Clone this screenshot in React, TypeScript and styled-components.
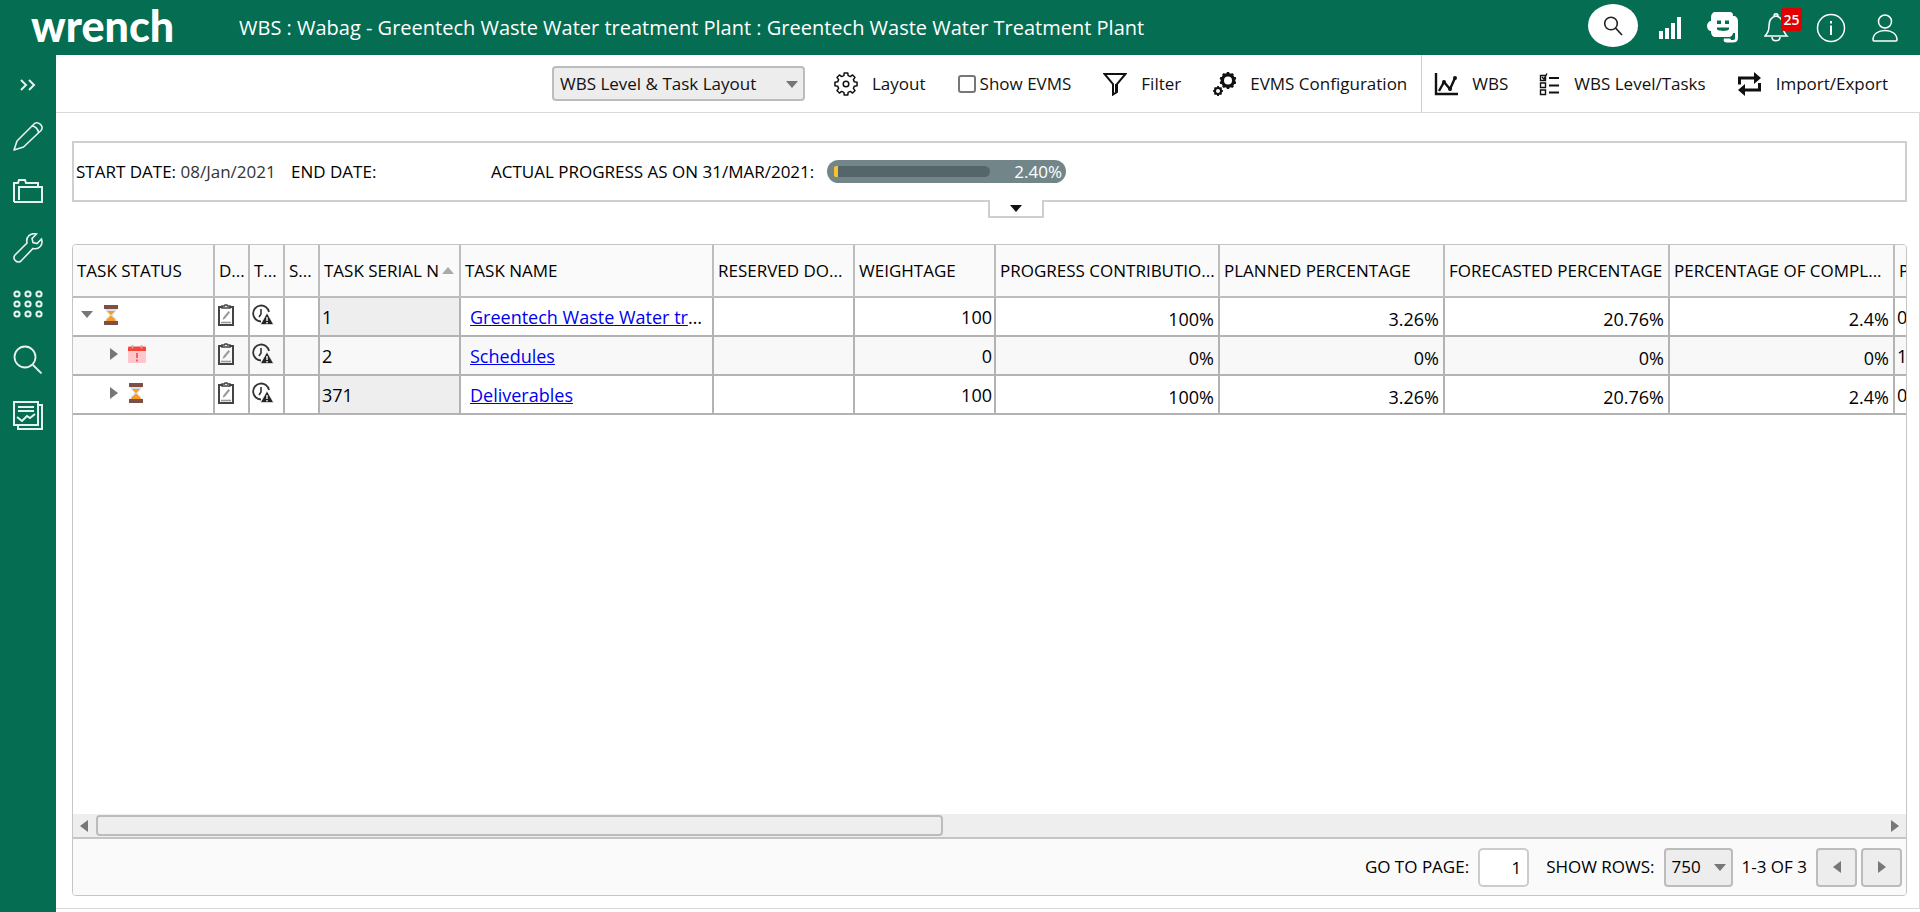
import React from "react";
import styled, { createGlobalStyle, css } from "styled-components";

const GlobalStyle = createGlobalStyle`
  *, *::before, *::after { box-sizing: border-box; }
  body {
    margin: 0;
    background: #fff;
    color: #111;
    font: 17px/24px "Open Sans", "Noto Sans", sans-serif;
  }
  button, input, select { font: inherit; color: inherit; }
  svg { display: block; flex: none; }
`;

const green = "#056d51";
const line = "#c5c5c5";

const Page = styled.div`
  min-height: 100vh;
  display: flex;
  flex-direction: column;
`;

/* ---------- top bar ---------- */

const TopBar = styled.header`
  height: 55px;
  padding: 0 22px 0 31px;
  display: flex;
  align-items: center;
  background: ${green};
  color: #fff;
`;

const Logo = styled.a`
  width: 208px;
  padding-bottom: 4px;
  color: #fff;
  font: 900 43px/48px Lato, sans-serif;
  text-decoration: none;
`;

const PageTitle = styled.h1`
  margin: 0;
  flex: 1;
  font-size: 20px;
  line-height: 28px;
  font-weight: 400;
  white-space: nowrap;
`;

const TopActions = styled.nav`
  display: flex;
  align-items: center;
  gap: 26px;
`;

const IconButton = styled.button`
  display: flex;
  padding: 0;
  border: 0;
  background: none;
  color: inherit;
  position: relative;
`;

const RoundButton = styled(IconButton)`
  width: 50px;
  height: 43px;
  margin: 0 -5px 4px 0;
  align-items: center;
  justify-content: center;
  border-radius: 50%;
  background: #fff;
  color: #222;
`;

const Badge = styled.span`
  position: absolute;
  left: 17px;
  top: -5px;
  width: 21px;
  height: 23px;
  border-radius: 3px;
  background: #e00000;
  color: #fff;
  font-size: 14px;
  line-height: 23px;
  font-weight: 600;
  text-align: center;
`;

/* ---------- side bar ---------- */

const Body = styled.div`
  flex: 1;
  display: flex;
`;

const SideBar = styled.nav`
  width: 56px;
  padding-top: 24px;
  display: flex;
  flex-direction: column;
  align-items: center;
  gap: 30px;
  background: ${green};
  color: #e6f2ee;
`;

const SideList = styled.div`
  display: flex;
  flex-direction: column;
  align-items: center;
  gap: 27px;

  ${IconButton} {
    height: 29px;
    align-items: center;
  }
`;

const Main = styled.main`
  flex: 1;
  min-width: 0;
  display: flex;
  flex-direction: column;
`;

/* ---------- toolbar ---------- */

const Toolbar = styled.div`
  height: 58px;
  padding-right: 29px;
  display: flex;
  align-items: center;
  justify-content: flex-end;
  border-bottom: 1px solid #d6dada;
`;

const ToolGroup = styled.div<{ $divided?: boolean }>`
  height: 100%;
  display: flex;
  align-items: center;
  gap: 26px;
  ${(p) =>
    p.$divided &&
    css`
      gap: 25px;
      margin-left: 11px;
      padding-left: 9px;
      border-left: 1px solid #b9d9d9;
    `}
`;

const ToolButton = styled.button`
  display: flex;
  align-items: center;
  gap: 14px;
  padding: 0 3px;
  border: 0;
  background: none;
  white-space: nowrap;
`;

const CheckLabel = styled.label`
  display: flex;
  align-items: center;
  gap: 4px;
  padding: 0 3px;
  white-space: nowrap;
`;

const CheckBox = styled.input`
  appearance: none;
  width: 18px;
  height: 18px;
  margin: 0;
  border: 2px solid #777;
  border-radius: 3px;
  background: #fff;
`;

const SelectBox = styled.span<{ $width: number; $height: number }>`
  position: relative;
  display: flex;
  width: ${(p) => p.$width}px;
  height: ${(p) => p.$height}px;

  select {
    appearance: none;
    width: 100%;
    padding: 0 20px 0 6px;
    border: 2px solid #bcbcbc;
    border-radius: 4px;
    background: #ededed;
  }
  svg {
    position: absolute;
    right: 7px;
    top: 50%;
    margin-top: -3px;
    pointer-events: none;
  }
`;

/* ---------- content ---------- */

const Content = styled.div`
  flex: 1;
  margin-bottom: 3px;
  padding: 28px 12px 12px 16px;
  display: flex;
  flex-direction: column;
  border: solid #d6dada;
  border-width: 0 1px 1px 0;
`;

const Summary = styled.section`
  position: relative;
  height: 61px;
  margin-bottom: 42px;
  padding: 0 2px;
  display: flex;
  align-items: center;
  border: 2px solid #cfcfcf;
`;

const Field = styled.span<{ $width: number }>`
  width: ${(p) => p.$width}px;
  color: #333;
  white-space: nowrap;
  b {
    color: #000;
    font-weight: 400;
  }
`;

const Progress = styled.div`
  width: 239px;
  height: 23px;
  padding: 0 4px 0 7px;
  display: flex;
  align-items: center;
  justify-content: space-between;
  border-radius: 12px;
  background: #72868a;
  color: #fff;
`;

const Track = styled.div`
  width: 156px;
  height: 11px;
  overflow: hidden;
  border-radius: 2px 6px 6px 2px;
  background: #54666a;
`;

const Fill = styled.div`
  height: 100%;
  background: #fbc02d;
`;

const Expander = styled.button`
  position: absolute;
  left: 50%;
  top: 100%;
  width: 56px;
  height: 18px;
  margin-left: -2px;
  padding: 0;
  display: flex;
  align-items: center;
  justify-content: center;
  border: 2px solid #cfcfcf;
  border-top: 0;
  background: #fff;
`;

/* ---------- grid ---------- */

const Grid = styled.section`
  flex: 1;
  display: flex;
  flex-direction: column;
  border: 1px solid ${line};
  border-radius: 4px;
  overflow: hidden;
`;

const TableArea = styled.div`
  flex: 1;
  overflow: hidden;
`;

const Table = styled.table`
  width: 1964px;
  table-layout: fixed;
  border-collapse: separate;
  border-spacing: 0;
  color: #000;
`;

const Th = styled.th`
  height: 53px;
  padding: 0 0 0 4px;
  border: solid #bdbdbd;
  border-width: 0 2px 2px 0;
  background: #fafafa;
  font-weight: 400;
  text-align: left;
`;

const HeadText = styled.div`
  display: flex;
  align-items: center;
  gap: 3px;
  white-space: nowrap;
`;

const Row = styled.tr`
  background: #fff;
  &:nth-child(even) { background: #f8f8f8; }
`;

type CellKind = "number" | "percent" | "serial" | "link" | "icon";

const Td = styled.td<{ $kind?: CellKind }>`
  height: 39px;
  padding: 0 2px;
  border: solid #b3b3b3;
  border-width: 0 2px 2px 0;
  font-size: 18px;
  line-height: 24px;
  white-space: nowrap;
  overflow: hidden;
  text-overflow: ellipsis;
  ${(p) => p.$kind === "icon" && css`padding: 0 2px 4px;`}
  ${(p) => (p.$kind === "number" || p.$kind === "percent") && css`text-align: right;`}
  ${(p) => p.$kind === "percent" && css`padding: 4px 4px 0 0;`}
  ${(p) => p.$kind === "serial" && css`${Row}:nth-child(odd) & { background: #eee; }`}
  ${(p) => p.$kind === "link" && css`padding: 0 6px 0 9px;`}
`;

const NameLink = styled.a`
  color: #0000ee;
`;

const StatusCell = styled.div<{ $level: number }>`
  padding-left: ${(p) => 6 + p.$level * 29}px;
  display: flex;
  align-items: center;
  gap: 10px;
`;

const ScrollBar = styled.div`
  height: 25px;
  padding: 0 7px;
  display: flex;
  align-items: center;
  gap: 8px;
  background: #eee;
  border-bottom: 2px solid ${line};
`;

const Rail = styled.div`
  flex: 1;
  height: 21px;
`;

const Thumb = styled.div`
  width: 47.4%;
  height: 100%;
  border: 2px solid #bcbcbc;
  border-radius: 4px;
`;

const Pager = styled.footer`
  height: 56px;
  padding-right: 4px;
  display: flex;
  align-items: center;
  justify-content: flex-end;
  gap: 9px;
  background: #fafafa;
  color: #000;
`;

const PagerLabel = styled.label`
  display: flex;
  align-items: center;
  gap: 9px;
  & + & { margin-left: 8px; }
`;

const PageInput = styled.input`
  width: 51px;
  height: 39px;
  padding: 0 6px;
  border: 2px solid #ccc;
  border-radius: 5px;
  background: #fff;
  text-align: right;
`;

const PagerButtons = styled.span`
  display: flex;
  gap: 4px;
`;

const PagerButton = styled.button`
  width: 41px;
  height: 39px;
  padding: 0;
  display: flex;
  align-items: center;
  justify-content: center;
  border: 2px solid #bcbcbc;
  border-radius: 4px;
  background: #ededed;
`;

/* ---------- drawings ---------- */

type Dir = "up" | "down" | "left" | "right";

const trianglePaths: Record<Dir, [number, number, string]> = {
  up: [12, 7, "M0 7 6 0l6 7z"],
  down: [12, 7, "M0 0h12L6 7z"],
  left: [8, 12, "M8 0v12L0 6z"],
  right: [8, 12, "M0 0v12l8-6z"],
};

function Triangle({ dir, color = "#777" }: { dir: Dir; color?: string }) {
  const [w, h, d] = trianglePaths[dir];
  return (
    <svg width={w} height={h} viewBox={`0 0 ${w} ${h}`} aria-hidden>
      <path d={d} fill={color} />
    </svg>
  );
}

function Icon({ w, h, sw = 1.6, children }: { w: number; h: number; sw?: number; children: React.ReactNode }) {
  return (
    <svg width={w} height={h} viewBox={`0 0 ${w} ${h}`} fill="none" stroke="currentColor" strokeWidth={sw} aria-hidden>
      {children}
    </svg>
  );
}

/* outline of a toothed wheel centred on cx, cy */
function gearPath(cx: number, cy: number, outer: number, inner: number, teeth: number) {
  const points: string[] = [];
  const step = (Math.PI * 2) / teeth;
  for (let i = 0; i < teeth; i++) {
    const a = i * step - Math.PI / 2;
    [[-0.32, inner], [-0.2, outer], [0.2, outer], [0.32, inner]].forEach(([o, r]) => {
      points.push(`${(cx + r * Math.cos(a + o * step)).toFixed(2)} ${(cy + r * Math.sin(a + o * step)).toFixed(2)}`);
    });
  }
  return `M${points.join("L")}Z`;
}

const SearchSmall = () => (
  <Icon w={20} h={20}>
    <circle cx="8" cy="7.500" r="6.300" />
    <path d="M12.500 12 19 19" strokeWidth="1.800" />
  </Icon>
);

const Bars = () => (
  <Icon w={22} h={22} sw={4}>
    <path d="M2 22v-8M8 22V11M14 22V6M20 22V0" />
  </Icon>
);

const Robot = () => (
  <Icon w={31} h={31}>
    <path d="M8 0h15c2 0 3 1 3 4h1c2 0 4 2 4 5v17c0 3-2 4.500-5 4.500h-5c-4 0-5-1.500-4-4h5c1.500 0 2 .6 2 1.500h2c1.500 0 2-.8 2-2v-5h-2c0 2-2 4-4 4H8c-2 0-4-2-4-5v-1c-2 0-4-2-4-5s2-5 4-5V5c0-3 2-5 4-5z" fill="currentColor" stroke="none" />
    <path d="M10 8.500h4v3.500h-4zM18 8.500h4v3.500h-4zM10 15.500h12v1.500c0 2.500-12 2.500-12 0z" fill={green} stroke="none" />
  </Icon>
);

const Bell = () => (
  <Icon w={26} h={29} sw={1.5}>
    <path d="M12 3C7 4 5 8 5 13c0 5-1 7-4 10h22c-3-3-4-5-4-10 0-5-2-9-7-10zM10 3c0-3 4-3 4 0M8 24c0 5 8 5 8 0" />
  </Icon>
);

const Info = () => (
  <Icon w={30} h={30} sw={1.5}>
    <circle cx="15" cy="15" r="13.500" />
    <path d="M15 12.500V22M15 8v2.500" strokeWidth="2" />
  </Icon>
);

const User = () => (
  <Icon w={26} h={28} sw={1.5}>
    <circle cx="13" cy="7.500" r="6.500" />
    <path d="M1 26c0-6 5-9.500 12-9.500S25 20 25 26c0 .7-.3 1-1 1H2c-.7 0-1-.3-1-1z" />
  </Icon>
);

const Expand = () => (
  <Icon w={18} h={12}>
    <path d="m2 1 5 5-5 5M10 1l5 5-5 5" strokeWidth="2" />
  </Icon>
);

const Pencil = () => (
  <Icon w={30} h={30}>
    <path d="M1 29 4 20 21 3c3-4 11 2 7 6.500L10.500 26zM19 5c3 0 6 3 6.500 6.500" strokeLinejoin="round" />
  </Icon>
);

const Folder = () => (
  <Icon w={30} h={25} sw={2}>
    <path d="M1 23V4h4l1-3h6l1 3h12v4M1 23h28V8H6v13" />
  </Icon>
);

const Wrench = () => (
  <Icon w={30} h={30}>
    <path d="M28.500 6 24 10.500l-4-1-1-4L23.500 1c-6-1.500-11 3-9.500 9L2 22c-3 4 2 9 6 6l12-12.500c6 1.500 10.500-3.500 8.500-9.500z" />
  </Icon>
);

const Dots = () => (
  <Icon w={30} h={28} sw={2}>
    {[4, 14, 24].map((y) => [4, 15, 26].map((x) => <circle key={`${x}-${y}`} cx={x} cy={y} r="2.600" />))}
  </Icon>
);

const SearchLarge = () => (
  <Icon w={30} h={29} sw={1.8}>
    <circle cx="12" cy="12" r="10.500" />
    <path d="m19.500 19.500 9 9" />
  </Icon>
);

const Report = () => (
  <Icon w={30} h={29} sw={2}>
    <path d="M1 1h24v23H1zM25 4h4v24H5v-4M5 6h16M5 10h16" />
    <path d="m4 16 5 4 5-5 3 2 5-4" />
  </Icon>
);

const Gear = () => (
  <Icon w={24} h={24} sw={1.5}>
    <path d={gearPath(12, 12, 11.2, 8.6, 8)} strokeLinejoin="round" />
    <circle cx="12" cy="12" r="2.800" />
  </Icon>
);

const Funnel = () => (
  <Icon w={24} h={24} sw={2}>
    <path d="M1.500 2h21L14 12v8l-4 2.500V12zM13 12v9" />
  </Icon>
);

const Gears = () => (
  <Icon w={23} h={24}>
    <path d={`${gearPath(15, 8.5, 8.5, 7.3, 10)}M11 8.500a4 4 0 1 0 8 0 4 4 0 1 0-8 0z`} fill="currentColor" fillRule="evenodd" stroke="none" />
    <path d={`${gearPath(5, 19, 5, 4.2, 8)}M3 19a2 2 0 1 0 4 0 2 2 0 1 0-4 0z`} fill="currentColor" fillRule="evenodd" stroke="none" />
  </Icon>
);

const Chart = () => (
  <Icon w={24} h={24} sw={2.4}>
    <path d="M2 1v21h22M5 19l5-9 6 7 5-11" />
    <g fill="currentColor" stroke="none">
      <circle cx="10" cy="10" r="2" />
      <circle cx="16" cy="17" r="2" />
      <circle cx="21" cy="6" r="2" />
    </g>
  </Icon>
);

const Levels = () => (
  <Icon w={21} h={24} sw={1.4}>
    <path d="M1.500 3.500h5v5h-5zM1.500 11h5v4.500h-5zM1.500 18h5v4.500h-5zM3 5l2 2 3-5.500" />
    <path d="M10 6h10M10 13.500h10M10 20.500h10" strokeWidth="2.200" />
  </Icon>
);

const Swap = () => (
  <Icon w={25} h={24} sw={3}>
    <path d="M2.500 12.500V6H18M22.500 11v7H7" />
    <path d="m17 0 7 6-7 6zM8 12l-7 6 7 6z" fill="currentColor" stroke="none" />
  </Icon>
);

const Hourglass = () => (
  <Icon w={16} h={20}>
    <path d="M2 3h12c0 4-4 5-4 7s4 3 4 7H2c0-4 4-5 4-7S2 7 2 3z" fill="#d8e2e6" stroke="none" />
    <path d="M4 6h8L8 10zM8 10c1 3 5 3 5 7H3c0-4 4-4 5-7z" fill="#fb9a1c" stroke="none" />
    <path d="M1 0h14v4H1zM1 16h14v4H1z" fill="#7b5147" stroke="none" />
  </Icon>
);

const CalendarAlert = () => (
  <Icon w={18} h={18}>
    <path d="M0 6h18v10.500c0 1-.5 1.500-1.500 1.500h-15C.5 18 0 17.500 0 16.500z" fill="#ffc7cb" stroke="none" />
    <path d="M0 6V3c0-1 .5-1.500 1.500-1.500h15c1 0 1.500.5 1.500 1.500v3z" fill="#f8443c" stroke="none" />
    <path d="M4.500 0v3.500M13.500 0v3.500" stroke="#b5b5b5" />
    <path d="M9 8v5M9 14.500v2" stroke="#f44" />
  </Icon>
);

const Clipboard = () => (
  <Icon w={18} h={22}>
    <path d="M2 3h14v18H2z" stroke="#444" strokeWidth="2" />
    <path d="M5 4V2h2.500L8 1h2l.5 1H13v2z" fill="#fff" stroke="#444" />
    <path d="m5.500 16 1-3 5-6 1.500 1.500-5 6z" fill="#999" stroke="none" />
    <path d="M4 18.500h10" stroke="#999" />
  </Icon>
);

const ClockAlert = () => (
  <Icon w={22} h={22}>
    <path d="M17 8A8 8 0 1 0 9 17.500" stroke="#333" strokeWidth="1.800" />
    <path d="M9 5v5l-2 3" stroke="#333" />
    <path d="m15 9 6.500 11.500h-13z" fill="#222" stroke="#fff" strokeWidth=".6" />
    <path d="M15 13v4M15 18v1.400" stroke="#fff" strokeWidth="1.400" />
  </Icon>
);

/* ---------- data ---------- */

const columns: { label: string; width: number; sorted?: boolean }[] = [
  { label: "TASK STATUS", width: 142 },
  { label: "D...", width: 35 },
  { label: "T...", width: 35 },
  { label: "S...", width: 35 },
  { label: "TASK SERIAL N", width: 141, sorted: true },
  { label: "TASK NAME", width: 253 },
  { label: "RESERVED DO...", width: 141 },
  { label: "WEIGHTAGE", width: 141 },
  { label: "PROGRESS CONTRIBUTIO...", width: 224 },
  { label: "PLANNED PERCENTAGE", width: 225 },
  { label: "FORECASTED PERCENTAGE", width: 225 },
  { label: "PERCENTAGE OF COMPL...", width: 225 },
  { label: "P", width: 142 },
];

const rows = [
  { level: 0, status: "active", serial: "1", name: "Greentech Waste Water treatment Plant", weight: "100", percents: ["100%", "3.26%", "20.76%", "2.4%"], last: "0" },
  { level: 1, status: "late", serial: "2", name: "Schedules", weight: "0", percents: ["0%", "0%", "0%", "0%"], last: "1" },
  { level: 1, status: "active", serial: "371", name: "Deliverables", weight: "100", percents: ["100%", "3.26%", "20.76%", "2.4%"], last: "0" },
];

const sideItems: [string, () => React.ReactElement][] = [
  ["Edit", Pencil],
  ["Folders", Folder],
  ["Tools", Wrench],
  ["Apps", Dots],
  ["Search", SearchLarge],
  ["Reports", Report],
];

export default function App() {
  return (
    <Page>
      <GlobalStyle />
      <TopBar>
        <Logo href="#">wrench</Logo>
        <PageTitle>WBS : Wabag - Greentech Waste Water treatment Plant : Greentech Waste Water Treatment Plant</PageTitle>
        <TopActions>
          <RoundButton aria-label="Search"><SearchSmall /></RoundButton>
          <IconButton aria-label="Statistics"><Bars /></IconButton>
          <IconButton aria-label="Assistant"><Robot /></IconButton>
          <IconButton aria-label="Notifications"><Bell /><Badge>25</Badge></IconButton>
          <IconButton aria-label="Information"><Info /></IconButton>
          <IconButton aria-label="Account"><User /></IconButton>
        </TopActions>
      </TopBar>
      <Body>
        <SideBar>
          <IconButton aria-label="Expand menu"><Expand /></IconButton>
          <SideList>
            {sideItems.map(([label, Drawing]) => (
              <IconButton key={label} aria-label={label}><Drawing /></IconButton>
            ))}
          </SideList>
        </SideBar>
        <Main>
          <Toolbar>
            <ToolGroup>
              <SelectBox $width={253} $height={35}>
                <select aria-label="Layout"><option>WBS Level &amp; Task Layout</option></select>
                <Triangle dir="down" />
              </SelectBox>
              <ToolButton><Gear />Layout</ToolButton>
              <CheckLabel><CheckBox type="checkbox" />Show EVMS</CheckLabel>
              <ToolButton><Funnel />Filter</ToolButton>
              <ToolButton><Gears />EVMS Configuration</ToolButton>
            </ToolGroup>
            <ToolGroup $divided>
              <ToolButton><Chart />WBS</ToolButton>
              <ToolButton><Levels />WBS Level/Tasks</ToolButton>
              <ToolButton><Swap />Import/Export</ToolButton>
            </ToolGroup>
          </Toolbar>
          <Content>
            <Summary>
              <Field $width={215}><b>START DATE:</b> 08/Jan/2021</Field>
              <Field $width={200}><b>END DATE:</b></Field>
              <Field $width={336}><b>ACTUAL PROGRESS AS ON 31/MAR/2021:</b></Field>
              <Progress>
                <Track><Fill style={{ width: "2.4%" }} /></Track>
                2.40%
              </Progress>
              <Expander aria-label="Show more"><Triangle dir="down" color="#111" /></Expander>
            </Summary>
            <Grid>
              <TableArea>
                <Table>
                  <colgroup>
                    {columns.map((c) => <col key={c.label} width={c.width} />)}
                  </colgroup>
                  <thead>
                    <tr>
                      {columns.map((c) => (
                        <Th key={c.label}>
                          <HeadText>
                            {c.label}
                            {c.sorted && <Triangle dir="up" color="#aaa" />}
                          </HeadText>
                        </Th>
                      ))}
                    </tr>
                  </thead>
                  <tbody>
                    {rows.map((r) => (
                      <Row key={r.serial}>
                        <Td $kind="icon">
                          <StatusCell $level={r.level}>
                            <Triangle dir={r.level ? "right" : "down"} />
                            {r.status === "late" ? <CalendarAlert /> : <Hourglass />}
                          </StatusCell>
                        </Td>
                        <Td $kind="icon"><Clipboard /></Td>
                        <Td $kind="icon"><ClockAlert /></Td>
                        <Td />
                        <Td $kind="serial">{r.serial}</Td>
                        <Td $kind="link"><NameLink href="#">{r.name}</NameLink></Td>
                        <Td />
                        <Td $kind="number">{r.weight}</Td>
                        {r.percents.map((p, i) => <Td key={i} $kind="percent">{p}</Td>)}
                        <Td>{r.last}</Td>
                      </Row>
                    ))}
                  </tbody>
                </Table>
              </TableArea>
              <ScrollBar>
                <IconButton aria-label="Scroll left"><Triangle dir="left" /></IconButton>
                <Rail><Thumb /></Rail>
                <IconButton aria-label="Scroll right"><Triangle dir="right" /></IconButton>
              </ScrollBar>
              <Pager>
                <PagerLabel>GO TO PAGE:<PageInput defaultValue="1" /></PagerLabel>
                <PagerLabel>
                  SHOW ROWS:
                  <SelectBox $width={69} $height={39}>
                    <select><option>750</option></select>
                    <Triangle dir="down" />
                  </SelectBox>
                </PagerLabel>
                <span>1-3 OF 3</span>
                <PagerButtons>
                  <PagerButton aria-label="Previous page"><Triangle dir="left" /></PagerButton>
                  <PagerButton aria-label="Next page"><Triangle dir="right" /></PagerButton>
                </PagerButtons>
              </Pager>
            </Grid>
          </Content>
        </Main>
      </Body>
    </Page>
  );
}
